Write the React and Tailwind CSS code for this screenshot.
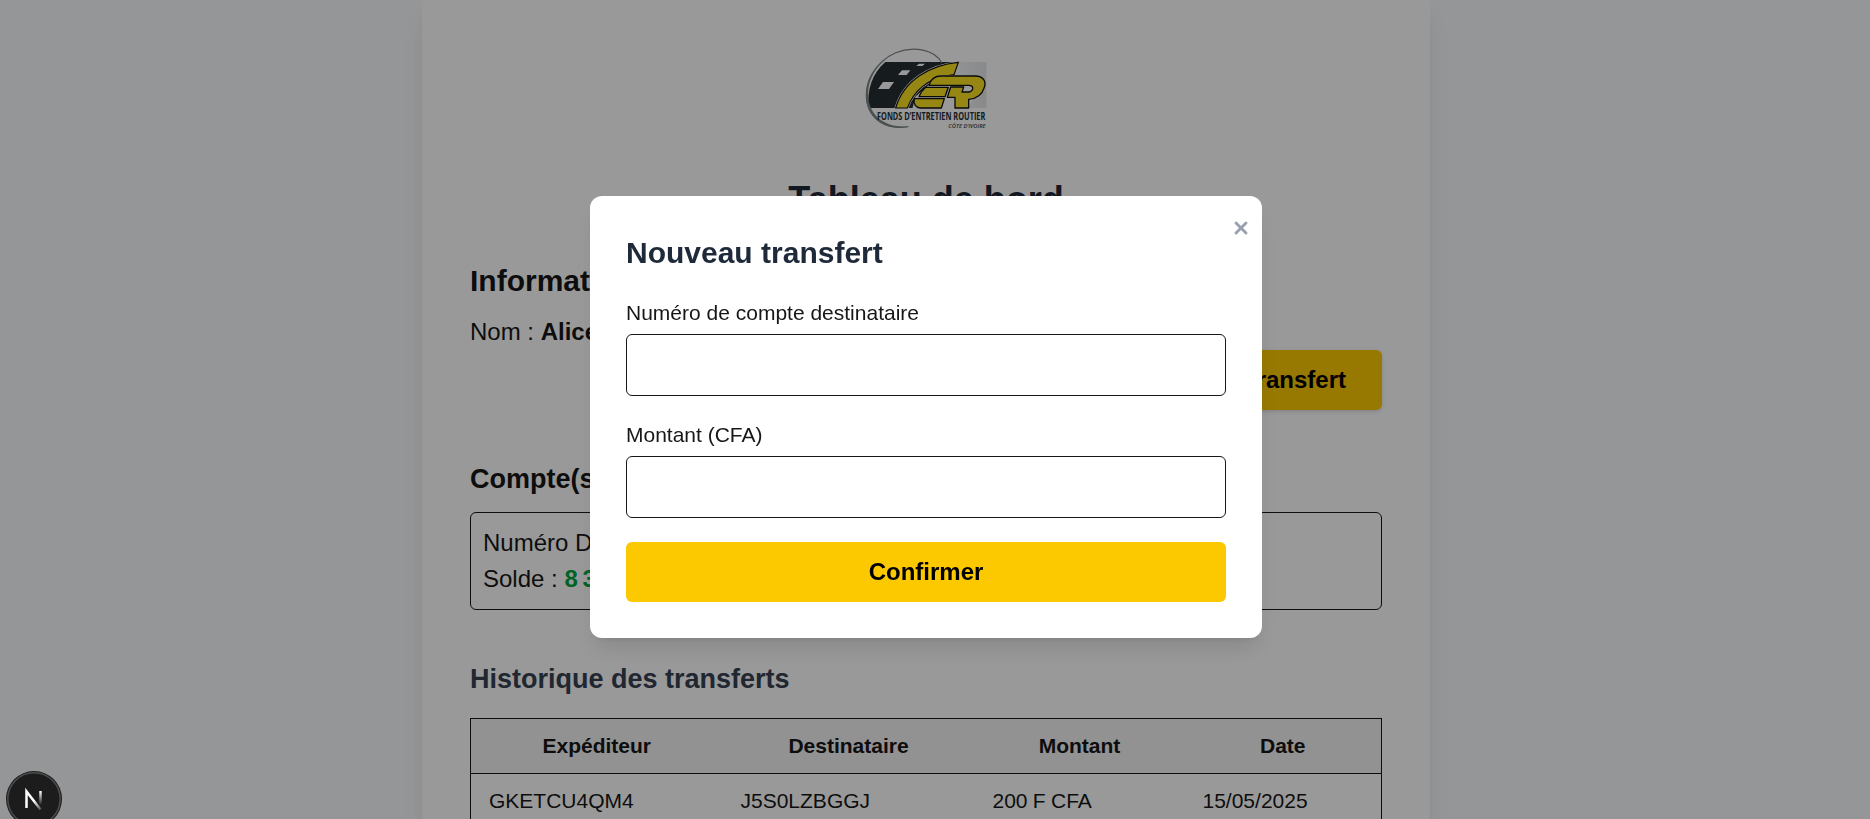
import React from "react";

const columns = [
  { label: "Expéditeur", width: "w-[252px]" },
  { label: "Destinataire", width: "w-[252px]" },
  { label: "Montant", width: "w-[210px]" },
  { label: "Date", width: "w-[197px]" },
];

const rows = [
  ["GKETCU4QM4", "J5S0LZBGGJ", "200 F CFA", "15/05/2025"],
  ["GKETCU4QM4", "J5S0LZBGGJ", "500 F CFA", "15/05/2025"],
];

function FerLogo() {
  return (
    <svg className="h-[115px] w-[170px]" viewBox="2 0 510 345" fill="none">
      <defs>
        <linearGradient id="panel" x1="300" x2="438" y1="0" y2="0" gradientUnits="userSpaceOnUse">
          <stop offset="0" stopColor="#fff" />
          <stop offset="1" stopColor="#e2e5e7" />
        </linearGradient>
      </defs>
      <rect x="300" y="96" width="138" height="138" fill="url(#panel)" />
      <path d="M135 96H352L345 130L285 234H84C80 180 95 130 135 96Z" fill="#252f33" />
      <path d="M304 98C284 60 220 46 166 68C102 96 72 160 80 215C88 262 130 302 204 290" stroke="#7d8688" strokeWidth="3.5" />
      <path d="M204 290C130 294 90 255 84 205C80 165 95 120 135 90C85 120 70 175 79 220C90 270 140 304 204 290Z" fill="#7d8688" />
      <path d="M128 156H161L146 177H113Z M185 121H210L199 135H173Z M236 101H254L246 108H228Z" fill="#fff" />
      <path d="M354 97C270 105 190 150 166 234H201C220 185 255 145 341 134Z" fill="#f2cf19" stroke="#fff" strokeWidth="7" />
      <path d="M354 97C270 105 190 150 166 234H201C220 185 255 145 341 134Z" fill="#fbe022" stroke="#111" strokeWidth="3.5" />
      <path d="M262 168L300 136H400L436 160L400 206L382 236H216L225 200Z" fill="#fff" />
      <g fill="#fbe022" stroke="#111" strokeWidth="4" strokeLinejoin="round">
        <path d="M256 172H324L314 200H236C240 190 246 180 256 172Z" />
        <path d="M222 206H312L303 234H240C226 232 218 222 222 206Z" />
        <path d="M266 166C272 145 286 138 302 138H405C430 138 438 156 432 172C426 192 411 206 385 208V234H344V202H321L331 171H370L365 186H386C394 185 398 179 397 173C396 168 392 166 386 166Z" />
      </g>
      <text x="110" y="270" fontFamily="Open Sans, sans-serif" fontSize="30" fontWeight="700" fill="#252f33" textLength="325" lengthAdjust="spacingAndGlyphs">FONDS D’ENTRETIEN ROUTIER</text>
      <text x="324" y="293" fontFamily="Open Sans, sans-serif" fontSize="14" fontStyle="italic" fontWeight="600" fill="#444" textLength="112" lengthAdjust="spacingAndGlyphs">CÔTE D’IVOIRE</text>
    </svg>
  );
}

function Dashboard() {
  return (
    <main className="flex w-[1852px] justify-center">
      <div className="flex h-[1100px] w-[1008px] flex-col bg-white px-12 shadow-[0_15px_22.5px_-4.5px_rgba(0,0,0,0.1),0_6px_9px_-6px_rgba(0,0,0,0.1)]">
        <div className="mt-[30px] flex justify-center">
          <FerLogo />
        </div>
        <h1 className="mt-[31px] text-center text-[36px] leading-[48px] font-bold text-gray-800">Tableau de bord</h1>
        <section className="mt-9 h-[63px]">
          <h2 className="text-[30px] leading-[42px] font-bold">Informations personnelles</h2>
          <p className="mt-3 leading-9">Nom : <strong>Alice</strong></p>
        </section>
        <div className="mt-[27px] flex justify-end">
          <button className="h-[60px] rounded-md bg-[#fcc800] px-9 font-bold text-black shadow-[0_1.5px_4.5px_rgba(0,0,0,0.1),0_1.5px_3px_-1.5px_rgba(0,0,0,0.1)]">Nouveau transfert</button>
        </div>
        <h2 className="mt-12 text-[27px] leading-[42px] font-bold">Compte(s)</h2>
        <div className="mt-3 rounded-md border border-[#171717] p-3">
          <p className="leading-9">Numéro De compte : GKETCU4QM4</p>
          <p className="leading-9">Solde : <strong className="text-[#00a63e] [word-spacing:-1.8px]">8 300 F CFA</strong></p>
        </div>
        <h2 className="mt-12 text-[27px] leading-[42px] font-bold text-gray-700">Historique des transferts</h2>
        <table className="mt-[18px] w-full table-fixed border-collapse border border-[#171717] text-[21px] leading-[30px]">
          <thead>
            <tr className="border-b border-[#171717] bg-[#f3f3f6]">
              {columns.map((c) => (
                <th key={c.label} className={`${c.width} px-[18px] py-3 font-bold`}>{c.label}</th>
              ))}
            </tr>
          </thead>
          <tbody>
            {rows.map((r, i) => (
              <tr key={i} className="border-b border-[#171717]">
                {r.map((c) => <td key={c} className="px-[18px] py-3 [word-spacing:-0.5px]">{c}</td>)}
              </tr>
            ))}
          </tbody>
        </table>
      </div>
    </main>
  );
}

function Field({ label }) {
  return (
    <label className="block text-[21px] leading-[30px]">
      {label}
      <input className="mt-1.5 block h-[62px] w-full rounded-md border border-[#171717] p-3 outline-none" />
    </label>
  );
}

function TransferModal() {
  return (
    <div className="fixed inset-0 flex items-center bg-black/40">
      <div className="flex w-[1852px] justify-center pt-[15px]">
        <div className="relative flex h-[442px] w-[672px] flex-col gap-6 rounded-xl bg-white p-9 shadow-[0_15px_22.5px_-4.5px_rgba(0,0,0,0.1),0_6px_9px_-6px_rgba(0,0,0,0.1)]">
          <button aria-label="Fermer" className="absolute top-[22px] right-[11px] text-gray-400">
            <svg className="block h-5 w-5" viewBox="0 0 20 20" fill="none" stroke="currentColor" strokeWidth="2.9" strokeLinecap="round">
              <path d="M5 5l10 10M15 5L5 15" />
            </svg>
          </button>
          <h2 className="text-[30px] leading-[42px] font-bold text-gray-800">Nouveau transfert</h2>
          <Field label="Numéro de compte destinataire" />
          <Field label="Montant (CFA)" />
          <button className="h-[60px] shrink-0 rounded-md bg-[#fcc800] font-bold text-black">Confirmer</button>
        </div>
      </div>
    </div>
  );
}

function DevBadge() {
  return (
    <div className="fixed bottom-[-8px] left-[6px] h-14 w-14">
      <svg viewBox="0 0 56 56" className="h-full w-full">
        <defs>
          <linearGradient id="stem" x1="0" y1="20" x2="0" y2="34" gradientUnits="userSpaceOnUse">
            <stop stopColor="#fff" />
            <stop offset="1" stopColor="#fff" stopOpacity="0" />
          </linearGradient>
          <linearGradient id="diag" x1="28" y1="30" x2="35" y2="39" gradientUnits="userSpaceOnUse">
            <stop stopColor="#fff" />
            <stop offset="1" stopColor="#fff" stopOpacity="0.2" />
          </linearGradient>
        </defs>
        <circle cx="28" cy="28" r="28" fill="#1c1c1c" />
        <circle cx="28" cy="28" r="26.2" fill="none" stroke="#4d4d4d" strokeWidth="1.5" />
        <path d="M20.5 37V20.5L34.5 38.5" fill="none" stroke="url(#diag)" strokeWidth="2.5" />
        <path d="M34.5 20V34" stroke="url(#stem)" strokeWidth="2.5" />
      </svg>
    </div>
  );
}

export default function App() {
  return (
    <div className="h-screen overflow-hidden bg-[#f8fafc] font-['Liberation_Sans',Arial,sans-serif] text-[24px] leading-9 text-[#171717]">
      <Dashboard />
      <TransferModal />
      <DevBadge />
    </div>
  );
}
